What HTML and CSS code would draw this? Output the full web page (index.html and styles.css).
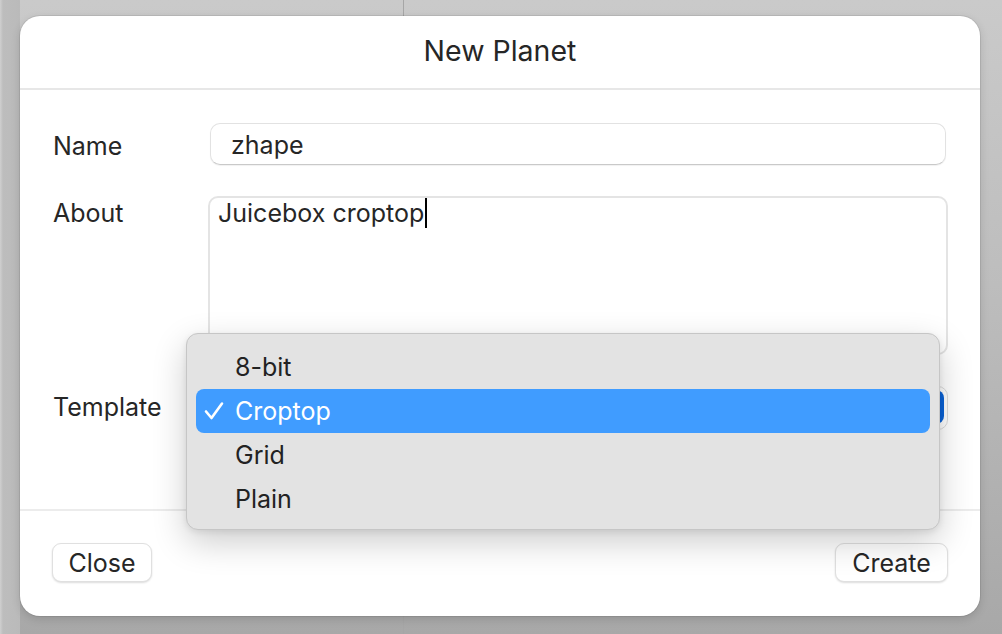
FILE: index.html
```html
<!DOCTYPE html>
<html>
<head>
<meta charset="utf-8">
<link rel="stylesheet" href="styles.css">
</head>
<body>
<div class="dialog">
  <div class="header">New Planet</div>
  <div class="form">
    <div class="row row-name">
      <div class="label">Name</div>
      <div class="input">zhape</div>
    </div>
    <div class="row row-about">
      <div class="label">About</div>
      <div class="textarea"><span class="caret">Juicebox croptop</span></div>
    </div>
    <div class="row row-template">
      <div class="label">Template</div>
      <div class="popup"><div class="popup-arrows"></div></div>
    </div>
  </div>
  <div class="footer">
    <div class="btn btn-close">Close</div>
    <div class="btn btn-create">Create</div>
  </div>
  <div class="menu">
    <div class="item">8-bit</div>
    <div class="item selected"><svg class="check" width="20" height="20" viewBox="0 0 20 20"><polyline points="2,10.5 7.5,17 18,2.5" fill="none" stroke="#fff" stroke-width="2.6" stroke-linecap="round" stroke-linejoin="round"/></svg>Croptop</div>
    <div class="item">Grid</div>
    <div class="item">Plain</div>
  </div>
</div>
</body>
</html>
```
FILE: styles.css
```css
html, body {
  margin: 0;
  padding: 0;
}
body {
  width: 1002px;
  height: 634px;
  overflow: hidden;
  box-sizing: border-box;
  padding: 16px 22px 0 20px;
  font-family: Inter, "Noto Sans", sans-serif;
  color: #262626;
  background:
    linear-gradient(to right, transparent 403px, #a6a6a6 403px, #a6a6a6 404px, transparent 404px),
    linear-gradient(to right, #d0d0d0 0px, #bdbdbd 3px, #bababa 20px, transparent 20px),
    linear-gradient(to bottom, #cacaca 0%, #bdbdbd 45%, #a8a8a8 100%);
}
.dialog {
  position: relative;
  width: 960px;
  height: 600px;
  background: #ffffff;
  border-radius: 20px;
  box-shadow: 0 0 0 1px rgba(0,0,0,0.07), 0 3px 10px rgba(0,0,0,0.14);
  display: flex;
  flex-direction: column;
}
.header {
  box-sizing: border-box;
  height: 74px;
  border-bottom: 2px solid #e7e7e7;
  display: flex;
  align-items: center;
  justify-content: center;
  font-size: 28.5px;
  padding-bottom: 4px;
}
.form {
  height: 421px;
  border-bottom: 2px solid #ececec;
  padding: 33px 32px 0 33px;
  box-sizing: border-box;
  display: flex;
  flex-direction: column;
  gap: 31px;
}
.row {
  display: flex;
  align-items: flex-start;
}
.label {
  width: 157px;
  flex: none;
  font-size: 25px;
  line-height: 44px;
}
.row-name {
  height: 42px;
}
.row-name .label {
  line-height: 42px;
  padding-top: 2px;
}
.input {
  width: 736px;
  height: 42px;
  box-sizing: border-box;
  border: 1px solid #e2e2e2;
  border-bottom-color: #c9c9c9;
  border-radius: 10px;
  padding-left: 20px;
  font-size: 25px;
  line-height: 42px;
  box-shadow: 0 1px 1px rgba(0,0,0,0.06);
}
.row-about .label {
  line-height: 34px;
}
.textarea {
  margin-left: -2px;
  width: 740px;
  height: 159px;
  box-sizing: border-box;
  border: 2px solid #e4e4e4;
  border-radius: 10px;
  padding: 0 0 0 8px;
  font-size: 25px;
  line-height: 30px;
}
.caret {
  border-right: 2px solid #000;
  padding-right: 1px;
}
.row-template .label {
  line-height: 42px;
}
.popup {
  width: 738px;
  height: 44px;
  box-sizing: border-box;
  border: 1px solid #dcdcdc;
  border-radius: 10px;
  background: #fff;
  display: flex;
  justify-content: flex-end;
  padding: 3px 3px 5px 0;
}
.popup-arrows {
  width: 34px;
  background: #0a63d8;
  border-radius: 8px;
}
.footer {
  flex: 1;
  display: flex;
  justify-content: space-between;
  align-items: flex-start;
  padding: 32px 32px 0 32px;
}
.btn {
  height: 39px;
  box-sizing: border-box;
  border: 1px solid #e0e0e0;
  border-radius: 9px;
  box-shadow: 0 1px 2px rgba(0,0,0,0.14);
  font-size: 25px;
  line-height: 38px;
  text-align: center;
  background: #fff;
}
.btn-close {
  width: 100px;
}
.btn-create {
  width: 113px;
}
.menu {
  position: absolute;
  left: 166px;
  top: 317px;
  width: 754px;
  height: 197px;
  box-sizing: border-box;
  background: #e3e3e3;
  border: 1px solid #c6c6c6;
  border-radius: 12px;
  box-shadow: 0 12px 34px rgba(0,0,0,0.2), 0 2px 6px rgba(0,0,0,0.08);
  padding: 11px 9px 10px 9px;
}
.item {
  position: relative;
  height: 44px;
  line-height: 44px;
  padding-left: 39px;
  font-size: 25px;
  color: #222;
  border-radius: 8px;
}
.item.selected {
  background: #409cff;
  color: #fff;
}
.check {
  position: absolute;
  left: 8px;
  top: 12px;
}
```
